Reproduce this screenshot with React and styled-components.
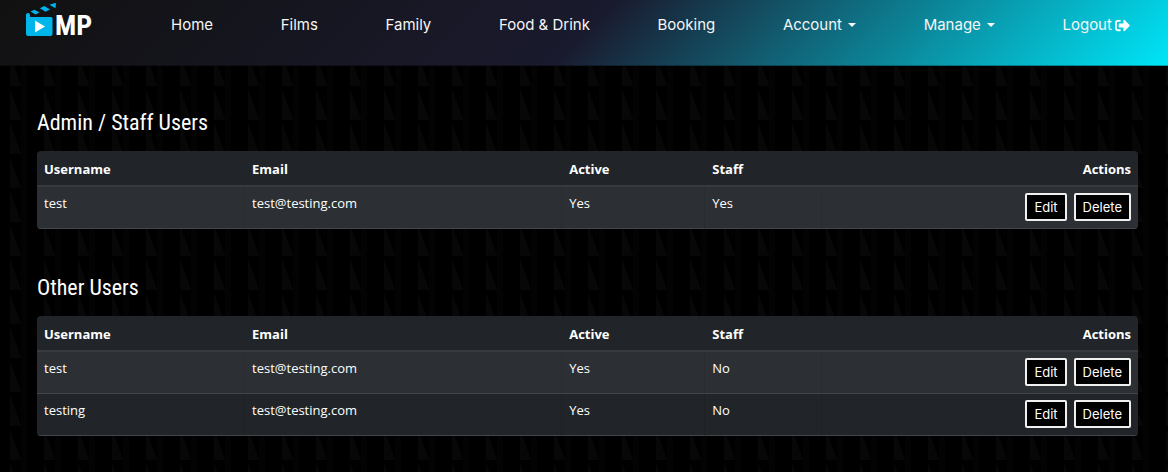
import React from "react";
import styled, { createGlobalStyle } from "styled-components";

const navFont = `Inter, "Open Sans", sans-serif`;

const GlobalStyle = createGlobalStyle`
  *, *::before, *::after { box-sizing: border-box; }
  body {
    margin: 0;
    color: #fff;
    font-family: "Open Sans", "Noto Sans", sans-serif;
    font-size: 13px;
    line-height: 20px;
    background-color: #000;
    background-image:
      conic-gradient(from 160deg at 10px 3px, #070707 0 20deg, transparent 20deg),
      linear-gradient(to right, transparent 21px, #030303 21px 27px, transparent 27px);
    background-size: 34px 34px;
    background-position: 0 18px;
  }
`;

const Header = styled.header`
  display: flex;
  align-items: flex-start;
  height: 66px;
  padding: 0 38px 0 24px;
  background: linear-gradient(135deg, #111 0%, #1a1a2e 50%, #00e5f8 100%);
  border-bottom: 1px solid rgba(0, 0, 0, 0.3);
  background-origin: border-box;
`;

const Brand = styled.a`
  display: flex;
  flex: none;
  gap: 1px;
  width: 147px;
  height: 40px;
  text-decoration: none;
`;

const Clapper = styled.svg`
  width: 30px;
  height: 40px;
  overflow: visible;
`;

const BrandName = styled.span`
  padding-top: 10px;
  color: #fff;
  font-family: "Roboto Condensed", Roboto, sans-serif;
  font-size: 28px;
  font-weight: 700;
  line-height: 32px;
`;

const Nav = styled.nav`
  display: flex;
  flex: 1;
  justify-content: space-between;
  padding-top: 15px;
`;

const NavLink = styled.a`
  display: flex;
  align-items: center;
  gap: ${({ $gap }) => $gap || 0}px;
  color: #f6f6f6;
  font-family: ${navFont};
  font-size: 15px;
  line-height: 20px;
  text-decoration: none;
  white-space: nowrap;
`;

const Caret = styled.span`
  border-top: 4px solid currentColor;
  border-left: 4px solid transparent;
  border-right: 4px solid transparent;
`;

const LogoutIcon = styled.svg`
  width: 15px;
  height: 15px;
  fill: #fff;
`;

const Main = styled.main`
  display: grid;
  gap: 42px;
  padding: 40px 30px 35px 37px;
`;

const SectionTitle = styled.h2`
  margin: 0 0 11px;
  font-family: "Roboto Condensed", "Liberation Sans Narrow", sans-serif;
  font-size: 22px;
  font-weight: 400;
  line-height: 34px;
`;

const Table = styled.table`
  width: 100%;
  table-layout: fixed;
  border-spacing: 0;
  border-radius: 4px;
  overflow: hidden;
  background: #212529;
`;

const Col = styled.col`
  width: ${({ $width }) => $width};
`;

const HeadCell = styled.th`
  height: 36px;
  padding: 2px 7px 0;
  border-bottom: 2px solid #373b3e;
  text-align: ${({ $align }) => $align || "left"};
  font-weight: 700;
`;

const Row = styled.tr`
  background: #212529;
  &:nth-child(odd) {
    background: #2c3034;
  }
`;

const Cell = styled.td`
  height: 42px;
  padding: 6px 7px 0;
  border-bottom: 1px solid #41464a;
  border-right: 1px solid rgba(0, 0, 0, 0.08);
  vertical-align: top;

  &:last-child {
    border-right: 0;
  }
`;

const Actions = styled.div`
  display: flex;
  justify-content: flex-end;
  gap: 7px;
`;

const ActionButton = styled.button`
  height: 28px;
  padding: 0 7px;
  border: 2px solid #f0f0f0;
  border-radius: 2px;
  background: #000;
  color: #fff;
  font-family: ${navFont};
  font-size: 13px;
  line-height: 20px;
`;

const links = [
  { label: "Home" },
  { label: "Films" },
  { label: "Family" },
  { label: "Food & Drink" },
  { label: "Booking" },
  { label: "Account", menu: true },
  { label: "Manage", menu: true },
];

const staffUsers = [
  { username: "test", email: "test@testing.com", active: "Yes", staff: "Yes" },
];

const otherUsers = [
  { username: "test", email: "test@testing.com", active: "Yes", staff: "No" },
  { username: "testing", email: "test@testing.com", active: "Yes", staff: "No" },
];

function Logo() {
  return (
    <Brand href="#" aria-label="MP home">
      <Clapper viewBox="0 0 30 40" aria-hidden="true">
        <path fill="#00b5e9" d="M2 14.500 Q2 13 4 13 Q6 13 6 15 L6 17 L27 17 Q28.500 17 28.500 18.500 L28.500 34 Q28.500 36 26.500 36 L4 36 Q2 36 2 34Z" />
        <path fill="#00b5e9" d="M6.500 11.500 L10.500 9.800 L15.500 12.500 L11.500 14.500Z M15.800 8.200 L20.300 6 L26 9.500 L21.500 11.800Z M25.500 4.800 L31 3 L32 3.500 L31.500 8 L30.500 7.800Z" />
        <path fill="#fff" d="M11 20.500 L21 26.500 L11 32.500Z" />
      </Clapper>
      <BrandName>MP</BrandName>
    </Brand>
  );
}

function UserSection({ title, users }) {
  return (
    <section>
      <SectionTitle>{title}</SectionTitle>
      <Table>
        <colgroup>
          <Col $width="18.9%" />
          <Col $width="28.8%" />
          <Col $width="13%" />
          <Col $width="10.6%" />
          <Col />
        </colgroup>
        <thead>
          <tr>
            <HeadCell>Username</HeadCell>
            <HeadCell>Email</HeadCell>
            <HeadCell>Active</HeadCell>
            <HeadCell>Staff</HeadCell>
            <HeadCell $align="right">Actions</HeadCell>
          </tr>
        </thead>
        <tbody>
          {users.map((user) => (
            <Row key={user.username}>
              <Cell>{user.username}</Cell>
              <Cell>{user.email}</Cell>
              <Cell>{user.active}</Cell>
              <Cell>{user.staff}</Cell>
              <Cell>
                <Actions>
                  <ActionButton type="button">Edit</ActionButton>
                  <ActionButton type="button">Delete</ActionButton>
                </Actions>
              </Cell>
            </Row>
          ))}
        </tbody>
      </Table>
    </section>
  );
}

export default function App() {
  return (
    <>
      <GlobalStyle />
      <Header>
        <Logo />
        <Nav>
          {links.map(({ label, menu }) => (
            <NavLink key={label} href="#" $gap={6}>
              {label}
              {menu && <Caret />}
            </NavLink>
          ))}
          <NavLink href="#" $gap={3}>
            Logout
            <LogoutIcon viewBox="0 0 512 512" aria-hidden="true">
              <path d="M497 273L329 441c-15 15-41 4.500-41-17v-96H152c-13.300 0-24-10.700-24-24v-96c0-13.300 10.700-24 24-24h136V88c0-21.400 25.900-32 41-17l168 168c9.300 9.400 9.300 24.600 0 34zM192 436v-40c0-6.600-5.400-12-12-12H96c-17.700 0-32-14.300-32-32V160c0-17.700 14.300-32 32-32h84c6.600 0 12-5.400 12-12V76c0-6.600-5.400-12-12-12H96c-53 0-96 43-96 96v192c0 53 43 96 96 96h84c6.600 0 12-5.400 12-12z" />
            </LogoutIcon>
          </NavLink>
        </Nav>
      </Header>
      <Main>
        <UserSection title="Admin / Staff Users" users={staffUsers} />
        <UserSection title="Other Users" users={otherUsers} />
      </Main>
    </>
  );
}
